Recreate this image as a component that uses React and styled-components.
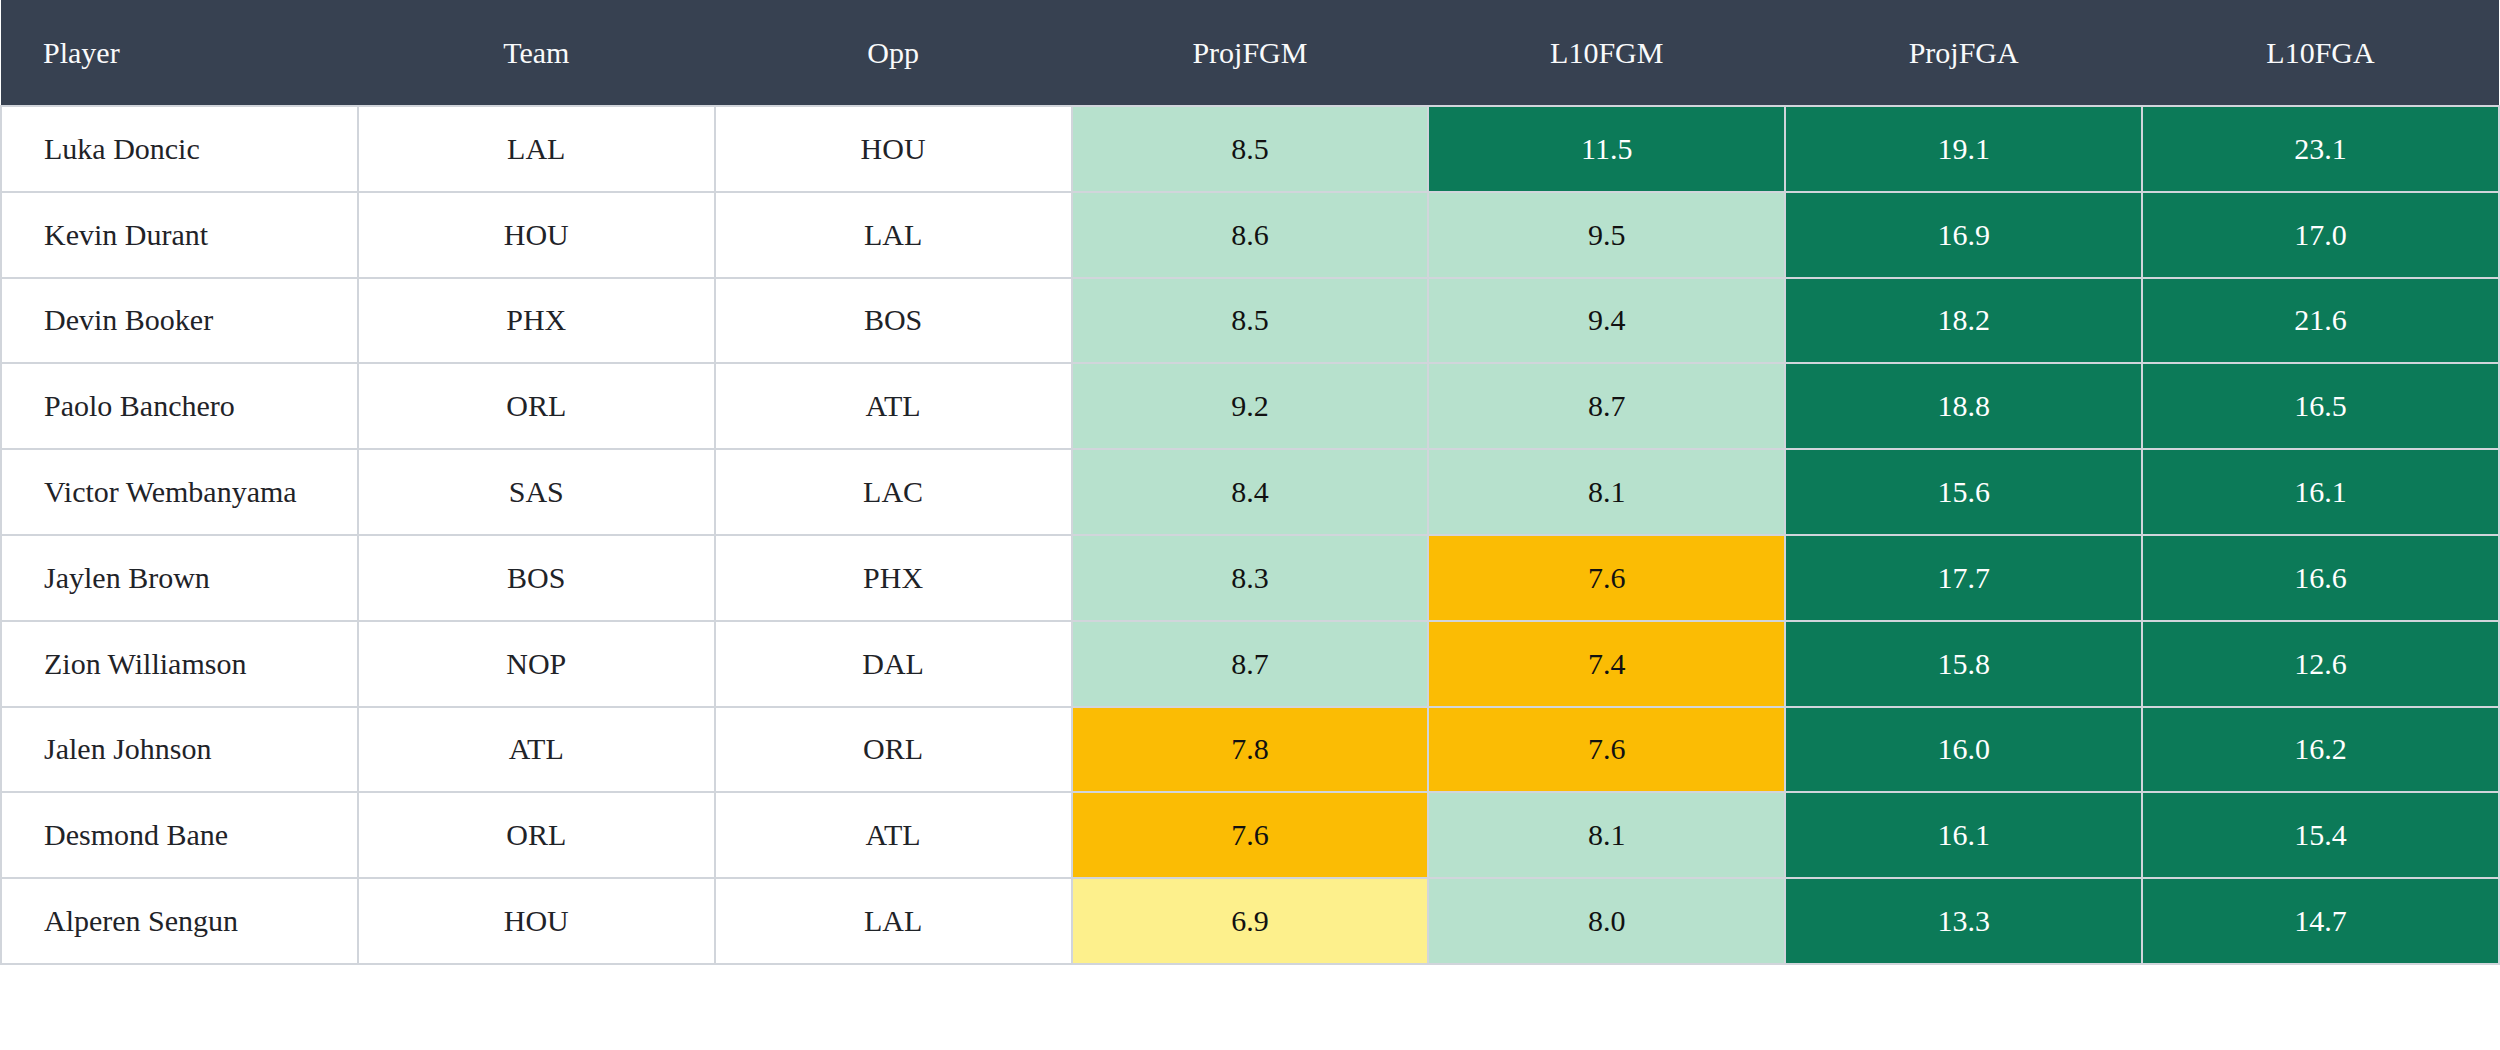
import styled, { createGlobalStyle } from 'styled-components'

const GlobalStyle = createGlobalStyle`
  html, body {
    margin: 0;
    padding: 0;
    background: #ffffff;
  }
  body {
    font-family: "Liberation Serif", "Times New Roman", serif;
  }
`

const tones = {
  light: { bg: '#b7e1cd', fg: '#111111' },
  dark: { bg: '#0c7a58', fg: '#ffffff' },
  orange: { bg: '#fbbc04', fg: '#111111' },
  yellow: { bg: '#fdf08c', fg: '#111111' },
}

const Page = styled.div`
  width: 2500px;
  height: 1050px;
  background: #ffffff;
`

const Table = styled.table`
  width: 100%;
  table-layout: fixed;
  border-collapse: collapse;
  font-size: 30px;
`

const HeadCell = styled.th`
  height: 105px;
  padding: 0 42px;
  background: #374151;
  color: #f9fafb;
  font-weight: 400;
  text-align: ${(p) => (p.$left ? 'left' : 'center')};
  border-bottom: 2px solid #d1d5db;
`

const Cell = styled.td`
  height: 83.8px;
  padding: 0 42px;
  border: 2px solid #d1d5db;
  color: ${(p) => (p.$tone ? tones[p.$tone].fg : '#1f2328')};
  background: ${(p) => (p.$tone ? tones[p.$tone].bg : '#ffffff')};
  text-align: ${(p) => (p.$left ? 'left' : 'center')};
  white-space: nowrap;
`

const columns = ['Player', 'Team', 'Opp', 'ProjFGM', 'L10FGM', 'ProjFGA', 'L10FGA']

const rows = [
  ['Luka Doncic', 'LAL', 'HOU', ['8.5', 'light'], ['11.5', 'dark'], ['19.1', 'dark'], ['23.1', 'dark']],
  ['Kevin Durant', 'HOU', 'LAL', ['8.6', 'light'], ['9.5', 'light'], ['16.9', 'dark'], ['17.0', 'dark']],
  ['Devin Booker', 'PHX', 'BOS', ['8.5', 'light'], ['9.4', 'light'], ['18.2', 'dark'], ['21.6', 'dark']],
  ['Paolo Banchero', 'ORL', 'ATL', ['9.2', 'light'], ['8.7', 'light'], ['18.8', 'dark'], ['16.5', 'dark']],
  ['Victor Wembanyama', 'SAS', 'LAC', ['8.4', 'light'], ['8.1', 'light'], ['15.6', 'dark'], ['16.1', 'dark']],
  ['Jaylen Brown', 'BOS', 'PHX', ['8.3', 'light'], ['7.6', 'orange'], ['17.7', 'dark'], ['16.6', 'dark']],
  ['Zion Williamson', 'NOP', 'DAL', ['8.7', 'light'], ['7.4', 'orange'], ['15.8', 'dark'], ['12.6', 'dark']],
  ['Jalen Johnson', 'ATL', 'ORL', ['7.8', 'orange'], ['7.6', 'orange'], ['16.0', 'dark'], ['16.2', 'dark']],
  ['Desmond Bane', 'ORL', 'ATL', ['7.6', 'orange'], ['8.1', 'light'], ['16.1', 'dark'], ['15.4', 'dark']],
  ['Alperen Sengun', 'HOU', 'LAL', ['6.9', 'yellow'], ['8.0', 'light'], ['13.3', 'dark'], ['14.7', 'dark']],
]

export default function App() {
  return (
    <Page>
      <GlobalStyle />
      <Table>
        <thead>
          <tr>
            {columns.map((col, idx) => (
              <HeadCell key={col} $left={idx === 0}>
                {col}
              </HeadCell>
            ))}
          </tr>
        </thead>
        <tbody>
          {rows.map(([name, team, opp, ...stats]) => (
            <tr key={name}>
              <Cell $left>{name}</Cell>
              <Cell>{team}</Cell>
              <Cell>{opp}</Cell>
              {stats.map(([value, tone], idx) => (
                <Cell key={idx} $tone={tone}>
                  {value}
                </Cell>
              ))}
            </tr>
          ))}
        </tbody>
      </Table>
    </Page>
  )
}
